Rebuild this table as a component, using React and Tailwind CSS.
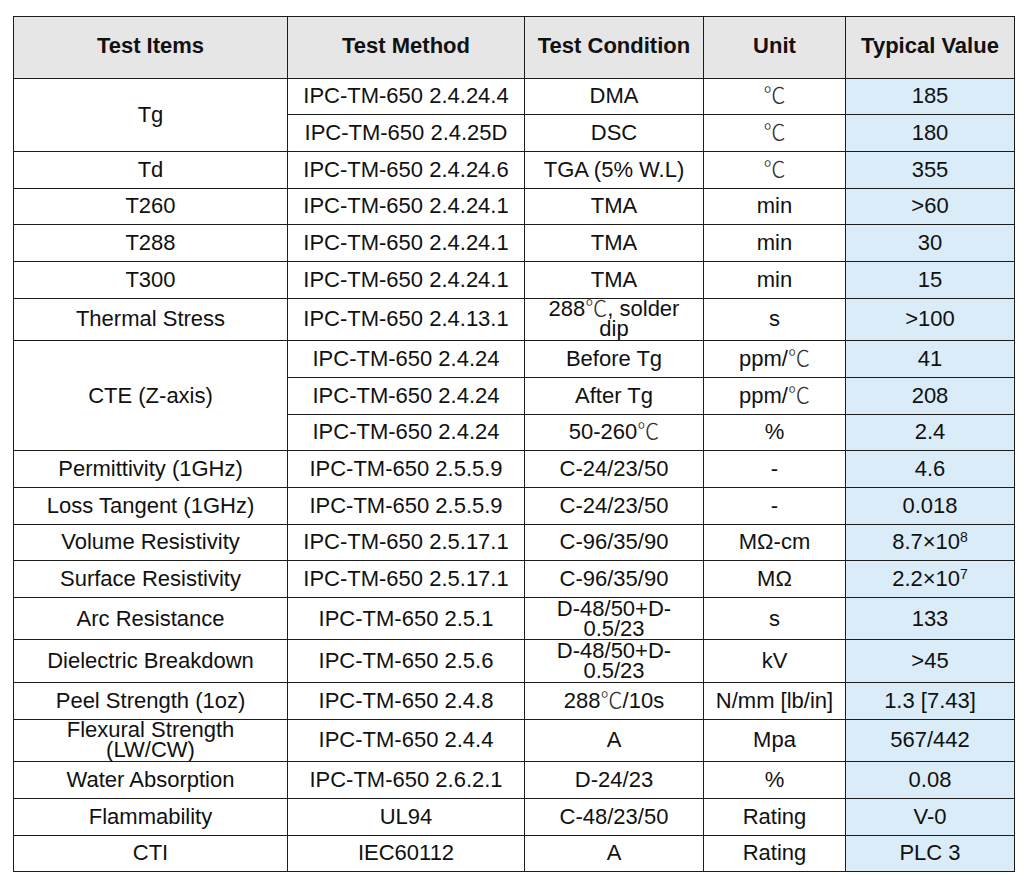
import React from 'react'

const C = () => <span className="font-['Noto_Sans_CJK_SC',sans-serif] font-light text-[#333] leading-[0px]">℃</span>

const Sup = ({ children }) => <sup className="text-[14px]">{children}</sup>

const rows = [
  { item: 'Tg', span: 2, method: 'IPC-TM-650 2.4.24.4', cond: 'DMA', unit: <C />, value: '185' },
  { method: 'IPC-TM-650 2.4.25D', cond: 'DSC', unit: <C />, value: '180' },
  { item: 'Td', method: 'IPC-TM-650 2.4.24.6', cond: 'TGA (5% W.L)', unit: <C />, value: '355' },
  { item: 'T260', method: 'IPC-TM-650 2.4.24.1', cond: 'TMA', unit: 'min', value: '>60' },
  { item: 'T288', method: 'IPC-TM-650 2.4.24.1', cond: 'TMA', unit: 'min', value: '30' },
  { item: 'T300', method: 'IPC-TM-650 2.4.24.1', cond: 'TMA', unit: 'min', value: '15' },
  { item: 'Thermal Stress', tall: true, method: 'IPC-TM-650 2.4.13.1', cond: <>288<C />, solder<br />dip</>, unit: 's', value: '>100' },
  { item: 'CTE (Z-axis)', span: 3, method: 'IPC-TM-650 2.4.24', cond: 'Before Tg', unit: <>ppm/<C /></>, value: '41' },
  { method: 'IPC-TM-650 2.4.24', cond: 'After Tg', unit: <>ppm/<C /></>, value: '208' },
  { method: 'IPC-TM-650 2.4.24', cond: <>50-260<C /></>, unit: '%', value: '2.4' },
  { item: 'Permittivity (1GHz)', method: 'IPC-TM-650 2.5.5.9', cond: 'C-24/23/50', unit: '-', value: '4.6' },
  { item: 'Loss Tangent (1GHz)', method: 'IPC-TM-650 2.5.5.9', cond: 'C-24/23/50', unit: '-', value: '0.018' },
  { item: 'Volume Resistivity', method: 'IPC-TM-650 2.5.17.1', cond: 'C-96/35/90', unit: 'MΩ-cm', value: <>8.7×10<Sup>8</Sup></> },
  { item: 'Surface Resistivity', method: 'IPC-TM-650 2.5.17.1', cond: 'C-96/35/90', unit: 'MΩ', value: <>2.2×10<Sup>7</Sup></> },
  { item: 'Arc Resistance', tall: true, method: 'IPC-TM-650 2.5.1', cond: <>D-48/50+D-<br />0.5/23</>, unit: 's', value: '133' },
  { item: 'Dielectric Breakdown', tall: true, method: 'IPC-TM-650 2.5.6', cond: <>D-48/50+D-<br />0.5/23</>, unit: 'kV', value: '>45' },
  { item: 'Peel Strength (1oz)', method: 'IPC-TM-650 2.4.8', cond: <>288<C />/10s</>, unit: 'N/mm [lb/in]', value: '1.3 [7.43]' },
  { item: <>Flexural Strength<br />(LW/CW)</>, tall: true, method: 'IPC-TM-650 2.4.4', cond: 'A', unit: 'Mpa', value: '567/442' },
  { item: 'Water Absorption', method: 'IPC-TM-650 2.6.2.1', cond: 'D-24/23', unit: '%', value: '0.08' },
  { item: 'Flammability', method: 'UL94', cond: 'C-48/23/50', unit: 'Rating', value: 'V-0' },
  { item: 'CTI', method: 'IEC60112', cond: 'A', unit: 'Rating', value: 'PLC 3' },
]

const cell = 'border border-[#1c1c1c] text-center align-middle p-0 leading-[20px]'

export default function App() {
  return (
    <div className="min-h-screen bg-white pt-[16px] pl-[13px] font-['Liberation_Sans',Arial,sans-serif] text-[22px] text-[#111]">
      <table className="table-fixed border-collapse w-[1001px]">
        <colgroup>
          <col className="w-[274px]" />
          <col className="w-[237px]" />
          <col className="w-[179px]" />
          <col className="w-[142px]" />
          <col className="w-[169px]" />
        </colgroup>
        <thead>
          <tr className="h-[61.5px] bg-[#e6e6e6] font-bold">
            <th className={cell + ' pb-[3px]'}>Test Items</th>
            <th className={cell + ' pb-[3px]'}>Test Method</th>
            <th className={cell + ' pb-[3px]'}>Test Condition</th>
            <th className={cell + ' pb-[3px]'}>Unit</th>
            <th className={cell + ' pb-[3px]'}>Typical Value</th>
          </tr>
        </thead>
        <tbody>
          {rows.map((r, i) => (
            <tr key={i} className={r.tall ? 'h-[42.5px]' : 'h-[36.7px]'}>
              {r.item !== undefined && (
                <td className={cell} rowSpan={r.span || 1}>{r.item}</td>
              )}
              <td className={cell}>{r.method}</td>
              <td className={cell}>{r.cond}</td>
              <td className={cell}>{r.unit}</td>
              <td className={cell + ' bg-[#daecf8]'}>{r.value}</td>
            </tr>
          ))}
        </tbody>
      </table>
    </div>
  )
}
